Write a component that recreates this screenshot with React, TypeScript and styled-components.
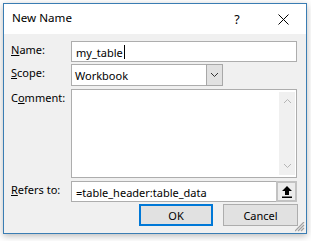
import React from "react";
import styled, { createGlobalStyle } from "styled-components";

const Global = createGlobalStyle`
  html, body { margin: 0; padding: 0; background: #ffffff; }
  body { font-family: "Noto Sans", "Open Sans", sans-serif; font-size: 11px; color: #000; }
`;

const Page = styled.div`
  padding: 3px 4px 7px 3px;
  width: 311px;
  height: 241px;
  box-sizing: border-box;
`;

const Window = styled.div`
  position: relative;
  width: 304px;
  height: 231px;
  box-sizing: border-box;
  border: 1px solid #3a7db3;
  background: #f0f0f0;
  box-shadow: 0 2px 7px rgba(0, 0, 0, 0.28);
  display: flex;
  flex-direction: column;
`;

const TitleBar = styled.div`
  height: 30px;
  background: #ffffff;
  display: flex;
  align-items: center;
  padding-left: 8px;
`;

const Title = styled.div`
  flex: 1;
  font-size: 11.6px;
  line-height: 15px;
  margin-top: -3px;
`;

const CaptionButton = styled.div`
  width: 46px;
  height: 30px;
  display: flex;
  align-items: center;
  justify-content: center;
  font-size: 12.5px;
`;

const Body = styled.div`
  flex: 1;
  padding: 7px 7px 0 7px;
  display: flex;
  flex-direction: column;
`;

const Row = styled.div<{ $h: number; $mt: number }>`
  display: grid;
  grid-template-columns: 60px 226px;
  height: ${(p) => p.$h}px;
  margin-top: ${(p) => p.$mt}px;
`;

const Label = styled.label`
  line-height: 15px;
  font-size: 11px;
  padding-top: 1px;
  u { text-decoration: underline; text-underline-offset: 1px; }
`;

const Field = styled.div`
  box-sizing: border-box;
  border: 1px solid #adadad;
  background: #ffffff;
  display: flex;
  align-items: center;
  padding-left: 4px;
  padding-top: 1px;
  font-size: 11px;
  position: relative;
`;

const Caret = styled.span`
  display: inline-block;
  width: 1px;
  height: 14px;
  background: #000;
  margin-left: 1px;
  vertical-align: middle;
`;

const SelectBox = styled.div`
  display: flex;
  width: 152px;
  box-sizing: border-box;
  border: 1px solid #adadad;
  background: #fff;
`;

const SelectText = styled.div`
  flex: 1;
  display: flex;
  align-items: center;
  padding-left: 3px;
  padding-top: 1px;
  font-size: 11px;
`;

const DropButton = styled.div`
  width: 17px;
  box-sizing: border-box;
  border: 1px solid #a8a8a8;
  margin: -1px -1px -1px 0;
  background: #e1e1e1;
  display: flex;
  align-items: center;
  justify-content: center;
`;

const TextArea = styled.div`
  box-sizing: border-box;
  border: 1px solid #adadad;
  background: #fff;
  display: flex;
  justify-content: flex-end;
  padding: 2px 1px 2px 0;
`;

const ScrollTrack = styled.div`
  width: 16px;
  background: #f0f0f0;
  display: flex;
  flex-direction: column;
  justify-content: space-between;
  align-items: center;
  padding: 6px 0;
`;

const RefButton = styled.div`
  position: absolute;
  right: -1px;
  top: -1px;
  bottom: -1px;
  width: 21px;
  box-sizing: border-box;
  border: 2px solid #c2c2c2;
  background: #ececec;
  display: flex;
  align-items: center;
  justify-content: center;
`;

const ButtonRow = styled.div`
  display: flex;
  justify-content: flex-end;
  gap: 10px;
  margin-top: 2px;
  padding-right: 1px;
`;

const Button = styled.div<{ $primary?: boolean }>`
  width: ${(p) => (p.$primary ? 74 : 75)}px;
  height: 22px;
  box-sizing: border-box;
  border: ${(p) => (p.$primary ? "2px solid #0078d7" : "1px solid #adadad")};
  background: #e1e1e1;
  display: flex;
  align-items: center;
  justify-content: center;
  font-size: 11px;
`;

const Grip = styled.svg`
  position: absolute;
  right: 1px;
  bottom: 1px;
`;

const Chevron = ({ up, color }: { up?: boolean; color: string }) => (
  <svg width="9" height="6" viewBox="0 0 9 6">
    <polyline
      points={up ? "1,5 4.5,1.5 8,5" : "1,1 4.5,4.5 8,1"}
      fill="none"
      stroke={color}
      strokeWidth="1"
    />
  </svg>
);

export default function App() {
  return (
    <>
      <Global />
      <Page>
        <Window>
          <TitleBar>
            <Title>New Name</Title>
            <CaptionButton>?</CaptionButton>
            <CaptionButton>
              <svg width="11" height="11" viewBox="0 0 11 11">
                <path d="M0.5 0.5 L10.5 10.5 M10.5 0.5 L0.5 10.5" stroke="#000" strokeWidth="1" />
              </svg>
            </CaptionButton>
          </TitleBar>
          <Body>
            <Row $h={21} $mt={0}>
              <Label>
                <u>N</u>ame:
              </Label>
              <Field>
                my_table<Caret />
              </Field>
            </Row>
            <Row $h={22} $mt={2}>
              <Label>
                <u>S</u>cope:
              </Label>
              <SelectBox>
                <SelectText>Workbook</SelectText>
                <DropButton>
                  <Chevron color="#333" />
                </DropButton>
              </SelectBox>
            </Row>
            <Row $h={89} $mt={3}>
              <Label>
                C<u>o</u>mment:
              </Label>
              <TextArea>
                <ScrollTrack>
                  <Chevron up color="#b5b5b5" />
                  <Chevron color="#b5b5b5" />
                </ScrollTrack>
              </TextArea>
            </Row>
            <Row $h={21} $mt={3}>
              <Label>
                <u>R</u>efers to:
              </Label>
              <Field>
                =table_header:table_data
                <RefButton>
                  <svg width="10" height="12" viewBox="0 0 10 12">
                    <path d="M5 0 L10 5 L7 5 L7 9 L3 9 L3 5 L0 5 Z" fill="#000" />
                    <rect x="0" y="10.5" width="10" height="1.5" fill="#000" />
                  </svg>
                </RefButton>
              </Field>
            </Row>
            <ButtonRow>
              <Button $primary>OK</Button>
              <Button>Cancel</Button>
            </ButtonRow>
          </Body>
          <Grip width="10" height="10" viewBox="0 0 10 10">
            <path d="M9 3 L3 9 M9 6 L6 9 M9 0 L0 9" stroke="#a0a0a0" strokeWidth="1.2" />
          </Grip>
        </Window>
      </Page>
    </>
  );
}
